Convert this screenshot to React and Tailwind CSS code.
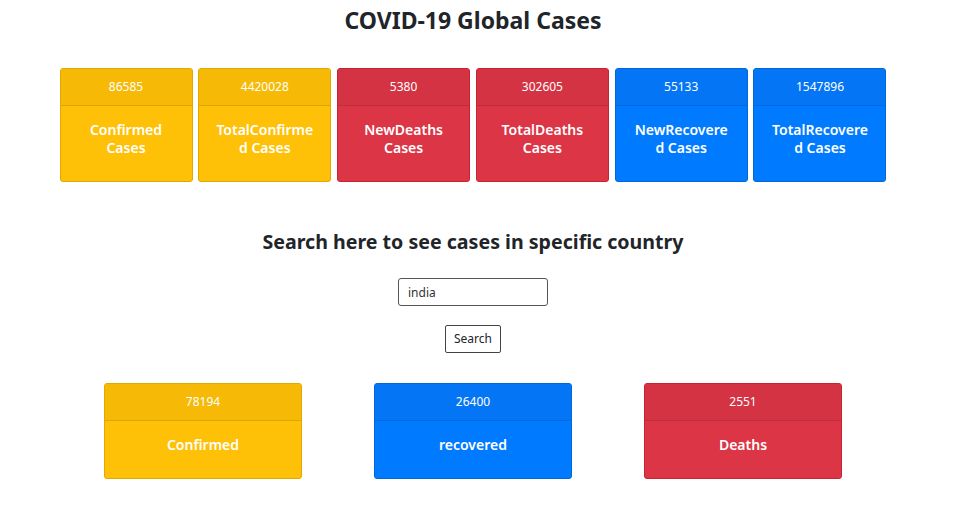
const global = [
  { n: "86585", label: "Confirmed Cases", color: "yellow" },
  { n: "4420028", label: "TotalConfirmed Cases", color: "yellow" },
  { n: "5380", label: "NewDeaths Cases", color: "red" },
  { n: "302605", label: "TotalDeaths Cases", color: "red" },
  { n: "55133", label: "NewRecovered Cases", color: "blue" },
  { n: "1547896", label: "TotalRecovered Cases", color: "blue" },
];

const country = [
  { n: "78194", label: "Confirmed", color: "yellow" },
  { n: "26400", label: "recovered", color: "blue" },
  { n: "2551", label: "Deaths", color: "red" },
];

const body = {
  yellow: "bg-[#ffc107] border-[#e0a800]",
  red: "bg-[#dc3545] border-[#c82333]",
  blue: "bg-[#007bff] border-[#0069d9]",
};
const head = {
  yellow: "bg-[#f5b906]",
  red: "bg-[#d33342]",
  blue: "bg-[#0476f5]",
};

function Card({ item, wide }) {
  return (
    <div
      className={`flex flex-col rounded-[3px] border text-white ${body[item.color]} ${
        wide ? "w-[198px] h-[96px]" : "w-[133px] h-[114px]"
      }`}
    >
      <div className={`h-[37px] flex items-center justify-center text-[12px] border-b border-black/10 ${head[item.color]}`}>
        {item.n}
      </div>
      <div className="flex-1 flex items-center justify-center px-[15px] pb-[9px]">
        <p className="w-full text-center font-semibold text-[14px] leading-[18px] break-words">
          {item.label}
        </p>
      </div>
    </div>
  );
}

export default function App() {
  return (
    <div className="w-[946px] flex flex-col items-center bg-white text-[#212529] font-['Noto_Sans',sans-serif]">
      <h3 className="mt-[5px] text-[23px] leading-[30px] font-bold">COVID-19 Global Cases</h3>

      <div className="mt-[33px] flex gap-[5.8px]">
        {global.map((g) => (
          <Card key={g.label} item={g} />
        ))}
      </div>

      <h4 className="mt-[47px] text-[19.6px] leading-[26px] font-bold">
        Search here to see cases in specific country
      </h4>

      <input
        defaultValue="india"
        className="mt-[23px] w-[150px] h-[28px] px-[9px] text-[12px] rounded-[3px] border border-[#555] text-[#333] outline-none"
      />

      <button className="mt-[19px] h-[28px] px-[8px] text-[12px] rounded-[2px] border border-[#444] bg-white">
        Search
      </button>

      <div className="mt-[30px] flex gap-[72px]">
        {country.map((c) => (
          <Card key={c.label} item={c} wide />
        ))}
      </div>
    </div>
  );
}
